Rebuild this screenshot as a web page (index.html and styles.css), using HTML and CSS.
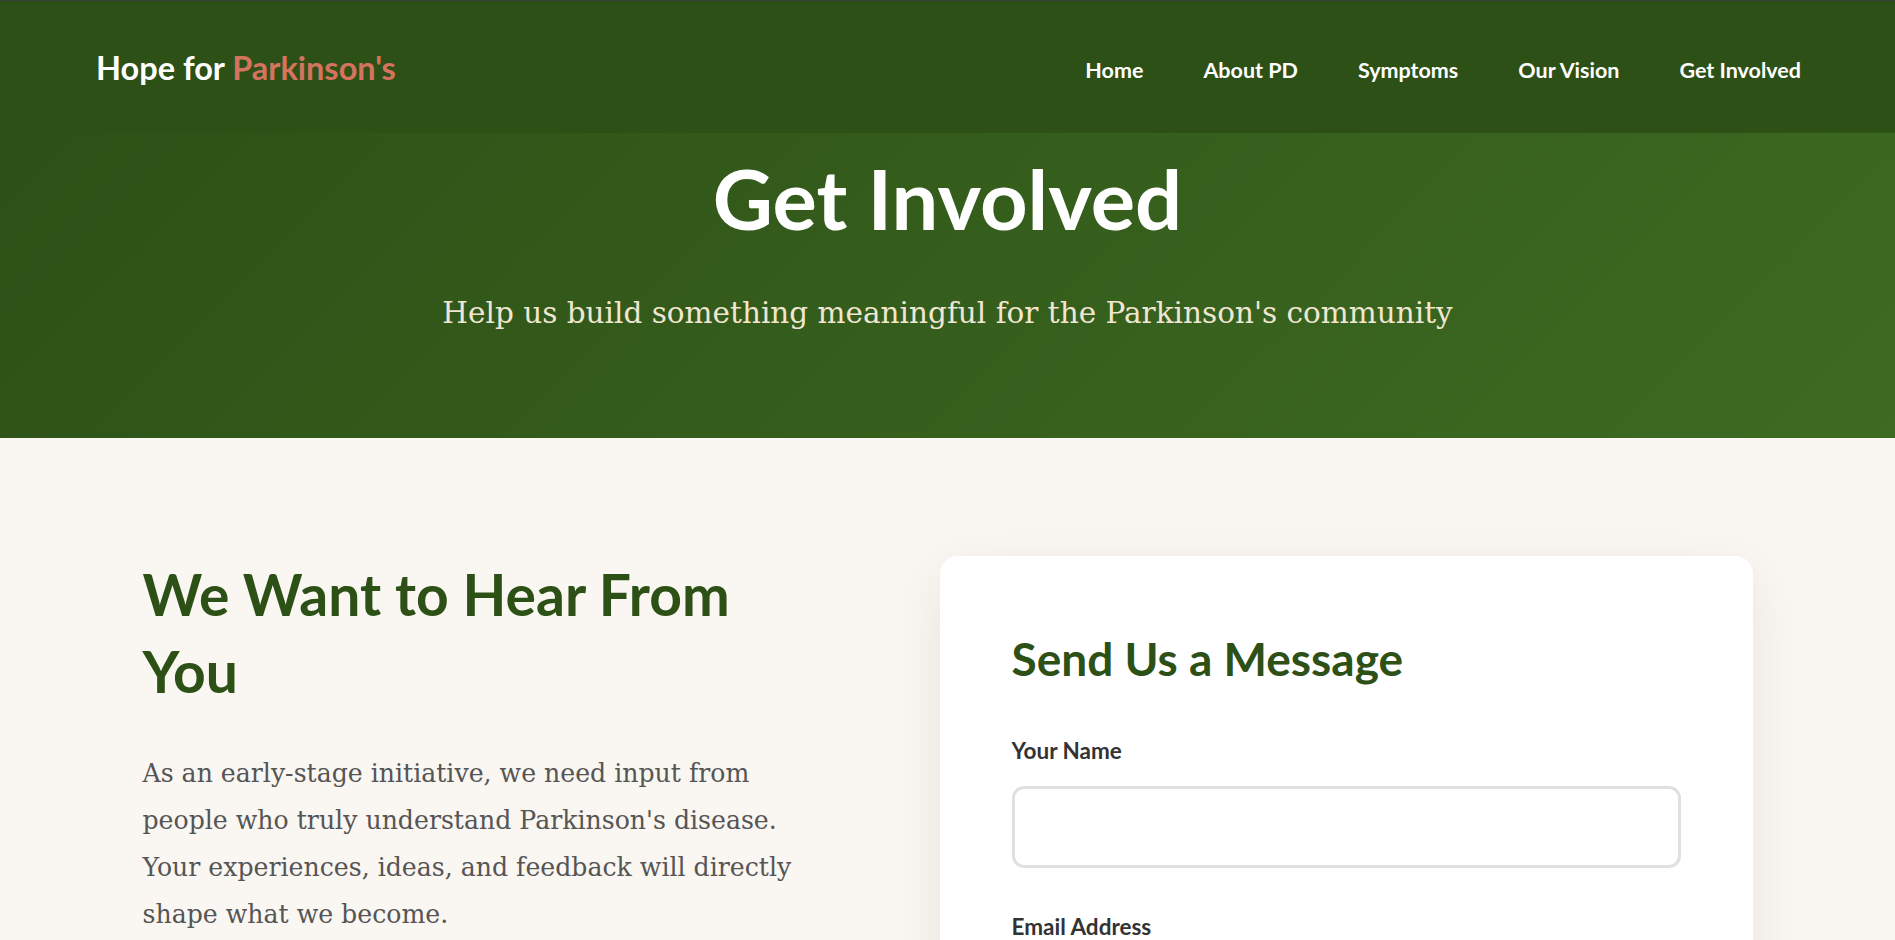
FILE: index.html
```html
<!DOCTYPE html>
<html lang="en">

<head>
    <meta charset="UTF-8">
    <meta name="viewport" content="width=device-width, initial-scale=1.0">
    <title>Get Involved - Hope for Parkinson's</title>
    <link rel="stylesheet" href="styles.css">
</head>

<body>

    <header class="site-header">
        <a class="logo" href="#">Hope for <span>Parkinson's</span></a>
        <nav class="main-nav">
            <a href="#">Home</a>
            <a href="#">About PD</a>
            <a href="#">Symptoms</a>
            <a href="#">Our Vision</a>
            <a href="#">Get Involved</a>
        </nav>
    </header>

    <section class="hero">
        <h1>Get Involved</h1>
        <p>Help us build something meaningful for the Parkinson's community</p>
    </section>

    <section class="contact">
        <div class="contact-grid">
            <div class="contact-intro">
                <h2>We Want to Hear From You</h2>
                <p>As an early-stage initiative, we need input from people who truly understand Parkinson's disease. Your experiences, ideas, and feedback will directly shape what we become.</p>
            </div>

            <div class="form-card">
                <h3>Send Us a Message</h3>
                <form>
                    <div class="form-group">
                        <label for="name">Your Name</label>
                        <input type="text" id="name">
                    </div>
                    <div class="form-group">
                        <label for="email">Email Address</label>
                        <input type="email" id="email">
                    </div>
                    <div class="form-group">
                        <label for="message">Message</label>
                        <textarea id="message"></textarea>
                    </div>
                    <button type="submit" class="btn">Send Message</button>
                </form>
            </div>
        </div>
    </section>

</body>

</html>
```

FILE: styles.css
```css
* {
    box-sizing: border-box;
}

body {
    margin: 0;
    font-family: Lato, "Open Sans", sans-serif;
    background-color: #faf6f1;
    color: #333;
}

/* Header */
.site-header {
    height: 133px;
    padding: 0 94px 0 96px;
    display: flex;
    align-items: center;
    justify-content: space-between;
    background-color: #2d5016;
    border-top: 1px solid #3c3c3c;
}

.logo {
    color: #fff;
    text-decoration: none;
    font-size: 32.5px;
    font-weight: 700;
}

.logo span {
    color: #d4735e;
}

.main-nav {
    display: flex;
    gap: 60px;
    margin-top: 5px;
}

.main-nav a {
    color: #fff;
    text-decoration: none;
    font-size: 21.5px;
    font-weight: 700;
}

/* Hero */
.hero {
    height: 305px;
    padding-top: 16px;
    text-align: center;
    background: linear-gradient(135deg, #2d5016 0%, #3d6b22 100%);
}

.hero h1 {
    margin: 0;
    color: #fff;
    font-size: 83px;
    line-height: 1.2;
}

.hero p {
    margin: 41px 0 0;
    color: #f0e6d2;
    font-family: "DejaVu Serif", serif;
    font-size: 29.5px;
    line-height: 1.6;
}

/* Contact */
.contact {
    padding: 118px 0;
}

.contact-grid {
    width: 1610px;
    margin: 0 auto;
    display: grid;
    grid-template-columns: 1fr 813px;
    gap: 120px;
    align-items: start;
}

.contact-intro h2 {
    margin: 0 0 40px;
    color: #2d5016;
    font-size: 57px;
    line-height: 77px;
}

.contact-intro p {
    margin: 0;
    color: #555;
    font-family: "DejaVu Serif", serif;
    font-size: 25.2px;
    line-height: 47px;
}

.form-card {
    background-color: #fff;
    border-radius: 18px;
    padding: 73px 72px 72px;
    box-shadow: 0 15px 60px rgba(0, 0, 0, 0.08);
}

.form-card h3 {
    margin: 0 0 45px;
    color: #2d5016;
    font-size: 46px;
    line-height: 1.3;
}

.form-group {
    margin-bottom: 42px;
}

.form-group label {
    display: block;
    margin-bottom: 18px;
    color: #333;
    font-size: 22.5px;
    font-weight: 700;
    line-height: 34px;
}

.form-group input,
.form-group textarea {
    width: 100%;
    height: 82px;
    padding: 20px;
    border: 3px solid #e0e0e0;
    border-radius: 12px;
    font-size: 22px;
    font-family: inherit;
}

.form-group textarea {
    height: 200px;
}

.btn {
    background-color: #2d5016;
    color: #fff;
    border: none;
    border-radius: 12px;
    padding: 22px 45px;
    font-size: 22px;
    font-weight: 700;
    font-family: inherit;
}
```
